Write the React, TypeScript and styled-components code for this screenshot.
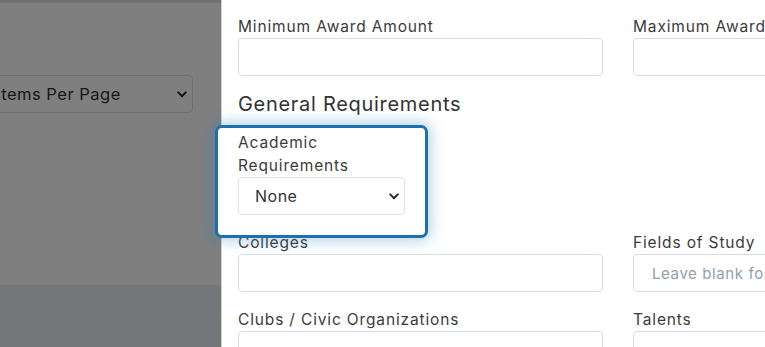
import styled, { createGlobalStyle } from 'styled-components';

const Global = createGlobalStyle`
    html, body {
        margin: 0;
        padding: 0;
        overflow: hidden;
    }
    body {
        font-family: Inter, "Open Sans", "Liberation Sans", sans-serif;
        color: #3b3b3b;
    }
    * {
        box-sizing: border-box;
    }
`;

const Screen = styled.div`
    display: flex;
    height: 347px;
    width: 765px;
    overflow: hidden;
    position: relative;
`;

const Backdrop = styled.div`
    position: relative;
    flex: none;
    width: 221px;
    display: flex;
    flex-direction: column;
`;

const TopStrip = styled.div`
    height: 3px;
    background: #dfe1e6;
`;

const PageBody = styled.div`
    flex: 1;
    display: flex;
    justify-content: flex-end;
    align-items: flex-start;
    padding: 72px 28px 0 0;
    background: #ffffff;
`;

const PageFooter = styled.div`
    height: 62px;
    background: #eceef4;
`;

const Dim = styled.div`
    position: absolute;
    inset: 0;
    background: rgba(0, 0, 0, 0.5);
`;

const SelectWrap = styled.div<{ $width?: number }>`
    position: relative;
    flex: none;
    width: ${p => (p.$width ? `${p.$width}px` : '100%')};
`;

const Select = styled.select<{ $big?: boolean }>`
    appearance: none;
    -webkit-appearance: none;
    display: block;
    width: 100%;
    height: 38px;
    padding: 0 30px 0 16px;
    border: 1px solid #dde3e8;
    border-radius: 4px;
    background: #ffffff;
    font-family: inherit;
    font-size: ${p => (p.$big ? '16.5px' : '16px')};
    letter-spacing: 0.5px;
    color: #333333;
    outline: none;
`;

const Chevron = styled.svg`
    position: absolute;
    right: 6px;
    top: 50%;
    width: 10px;
    height: 7px;
    margin-top: -3px;
    pointer-events: none;
`;

const Panel = styled.section`
    position: relative;
    z-index: 1;
    flex: none;
    width: 794px;
    padding: 15px 17px 0 16px;
    background: #ffffff;
    border-left: 1px solid #cfd0d2;
`;

const Row = styled.div`
    display: grid;
    grid-template-columns: 365px 365px;
    column-gap: 30px;
`;

const Field = styled.div<{ $width?: number; $spotlight?: boolean }>`
    position: relative;
    width: ${p => (p.$width ? `${p.$width}px` : 'auto')};
    margin-bottom: 16px;
    ${p => p.$spotlight && `
        z-index: 2;
        &::before {
            content: '';
            position: absolute;
            top: -6px;
            left: -23px;
            right: -23px;
            bottom: -23px;
            z-index: -1;
            background: #ffffff;
            border: 3px solid #1b70ad;
            border-radius: 7px;
            box-shadow: 0 0 14px 3px rgba(40, 130, 195, 0.35);
        }
    `}
`;

const Label = styled.label`
    display: block;
    font-size: 15.5px;
    line-height: 23px;
    letter-spacing: 0.85px;
    color: #3b3b3b;
`;

const Input = styled.input`
    display: block;
    width: 100%;
    height: 38px;
    padding: 0 18px;
    border: 1px solid #d5dde4;
    border-radius: 4px;
    background: #ffffff;
    font-family: inherit;
    font-size: 15px;
    letter-spacing: 0.6px;
    color: #333333;
    outline: none;

    &::placeholder {
        color: #8fa0ab;
    }
`;

const SectionTitle = styled.h2`
    margin: 0 0 15px 0;
    font-size: 20px;
    line-height: 24px;
    font-weight: 400;
    letter-spacing: 0.7px;
    color: #333333;
`;

const ChevronIcon = () => (
    <Chevron viewBox="0 0 10 7">
        <path d="M1.2 1.4 5 5.2 8.8 1.4" fill="none" stroke="#2b2b2b" strokeWidth="2" strokeLinecap="round" strokeLinejoin="round" />
    </Chevron>
);

type TextFieldProps = {
    label: string;
    placeholder?: string;
};

const TextField = ({ label, placeholder }: TextFieldProps) => (
    <Field>
        <Label>{label}</Label>
        <Input type="text" placeholder={placeholder} />
    </Field>
);

const App = () => {
    return (
        <>
            <Global />
            <Screen>
                <Backdrop>
                    <TopStrip />
                    <PageBody>
                        <SelectWrap $width={214}>
                            <Select $big defaultValue="">
                                <option value="">Items Per Page</option>
                                <option value="10">10</option>
                                <option value="25">25</option>
                            </Select>
                            <ChevronIcon />
                        </SelectWrap>
                    </PageBody>
                    <PageFooter />
                    <Dim />
                </Backdrop>
                <Panel>
                    <Row>
                        <TextField label="Minimum Award Amount" />
                        <TextField label="Maximum Award Amount" />
                    </Row>
                    <SectionTitle>General Requirements</SectionTitle>
                    <Field $width={167} $spotlight>
                        <Label>Academic Requirements</Label>
                        <SelectWrap>
                            <Select defaultValue="none">
                                <option value="none">None</option>
                                <option value="gpa">Minimum GPA</option>
                            </Select>
                            <ChevronIcon />
                        </SelectWrap>
                    </Field>
                    <Row>
                        <TextField label="Colleges" />
                        <TextField label="Fields of Study" placeholder="Leave blank for all fields of study" />
                    </Row>
                    <Row>
                        <TextField label="Clubs / Civic Organizations" />
                        <TextField label="Talents" />
                    </Row>
                </Panel>
            </Screen>
        </>
    );
};

export default App;
